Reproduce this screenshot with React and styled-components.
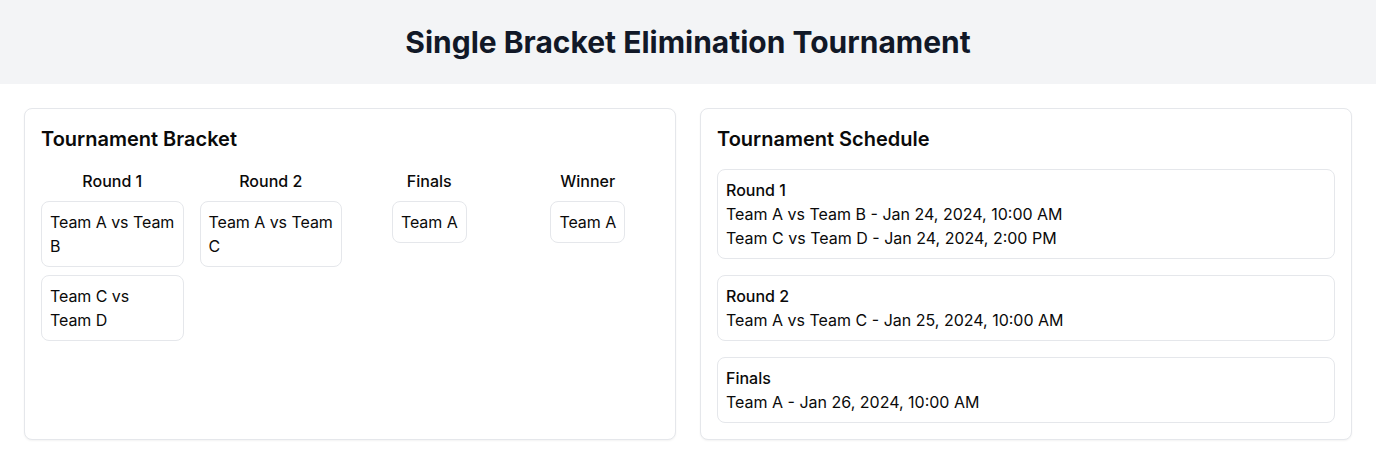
import React from 'react';
import styled, { createGlobalStyle } from 'styled-components';

const GlobalStyle = createGlobalStyle`
  * {
    box-sizing: border-box;
  }
  body {
    margin: 0;
    font-family: Inter, 'Noto Sans', sans-serif;
    color: #0a0a0a;
    background: #fff;
  }
`;

const Header = styled.header`
  background-color: #f3f4f6;
  padding: 24px;
  text-align: center;
`;

const Title = styled.h1`
  margin: 0;
  font-size: 30px;
  line-height: 36px;
  font-weight: 700;
  color: #111827;
`;

const Main = styled.main`
  display: grid;
  grid-template-columns: 1fr 1fr;
  gap: 24px;
  padding: 24px;
`;

const Card = styled.section`
  border: 1px solid #e5e7eb;
  border-radius: 8px;
  background: #fff;
  padding: 16px;
  box-shadow: 0 1px 2px rgba(0, 0, 0, 0.05);
`;

const CardTitle = styled.h2`
  margin: 0 0 16px;
  font-size: 20px;
  line-height: 28px;
  font-weight: 600;
`;

const Bracket = styled.div`
  display: grid;
  grid-template-columns: repeat(4, 1fr);
  gap: 16px;
`;

const Column = styled.div`
  display: flex;
  flex-direction: column;
  align-items: center;
  gap: 8px;
  min-width: 0;
`;

const ColumnTitle = styled.h3`
  margin: 0;
  font-size: 16px;
  line-height: 24px;
  font-weight: 500;
`;

const Match = styled.div`
  border: 1px solid #e5e7eb;
  border-radius: 8px;
  padding: 8px;
  font-size: 16px;
  line-height: 24px;
  letter-spacing: -0.06px;
  max-width: 100%;
`;

const Schedule = styled.div`
  display: flex;
  flex-direction: column;
  gap: 16px;
`;

const ScheduleItem = styled.div`
  border: 1px solid #e5e7eb;
  border-radius: 8px;
  padding: 8px;
  font-size: 16px;
  line-height: 24px;
`;

const ItemLabel = styled.div`
  font-weight: 500;
`;

const rounds = [
  { name: 'Round 1', matches: ['Team A vs Team B', 'Team C vs Team D'] },
  { name: 'Round 2', matches: ['Team A vs Team C'] },
  { name: 'Finals', matches: ['Team A'] },
  { name: 'Winner', matches: ['Team A'] },
];

const schedule = [
  {
    name: 'Round 1',
    games: [
      'Team A vs Team B - Jan 24, 2024, 10:00 AM',
      'Team C vs Team D - Jan 24, 2024, 2:00 PM',
    ],
  },
  { name: 'Round 2', games: ['Team A vs Team C - Jan 25, 2024, 10:00 AM'] },
  { name: 'Finals', games: ['Team A - Jan 26, 2024, 10:00 AM'] },
];

export default function App() {
  return (
    <>
      <GlobalStyle />
      <Header>
        <Title>Single Bracket Elimination Tournament</Title>
      </Header>
      <Main>
        <Card>
          <CardTitle>Tournament Bracket</CardTitle>
          <Bracket>
            {rounds.map(round => (
              <Column key={round.name}>
                <ColumnTitle>{round.name}</ColumnTitle>
                {round.matches.map(m => (
                  <Match key={m}>{m}</Match>
                ))}
              </Column>
            ))}
          </Bracket>
        </Card>
        <Card>
          <CardTitle>Tournament Schedule</CardTitle>
          <Schedule>
            {schedule.map(item => (
              <ScheduleItem key={item.name}>
                <ItemLabel>{item.name}</ItemLabel>
                {item.games.map(g => (
                  <div key={g}>{g}</div>
                ))}
              </ScheduleItem>
            ))}
          </Schedule>
        </Card>
      </Main>
    </>
  );
}
